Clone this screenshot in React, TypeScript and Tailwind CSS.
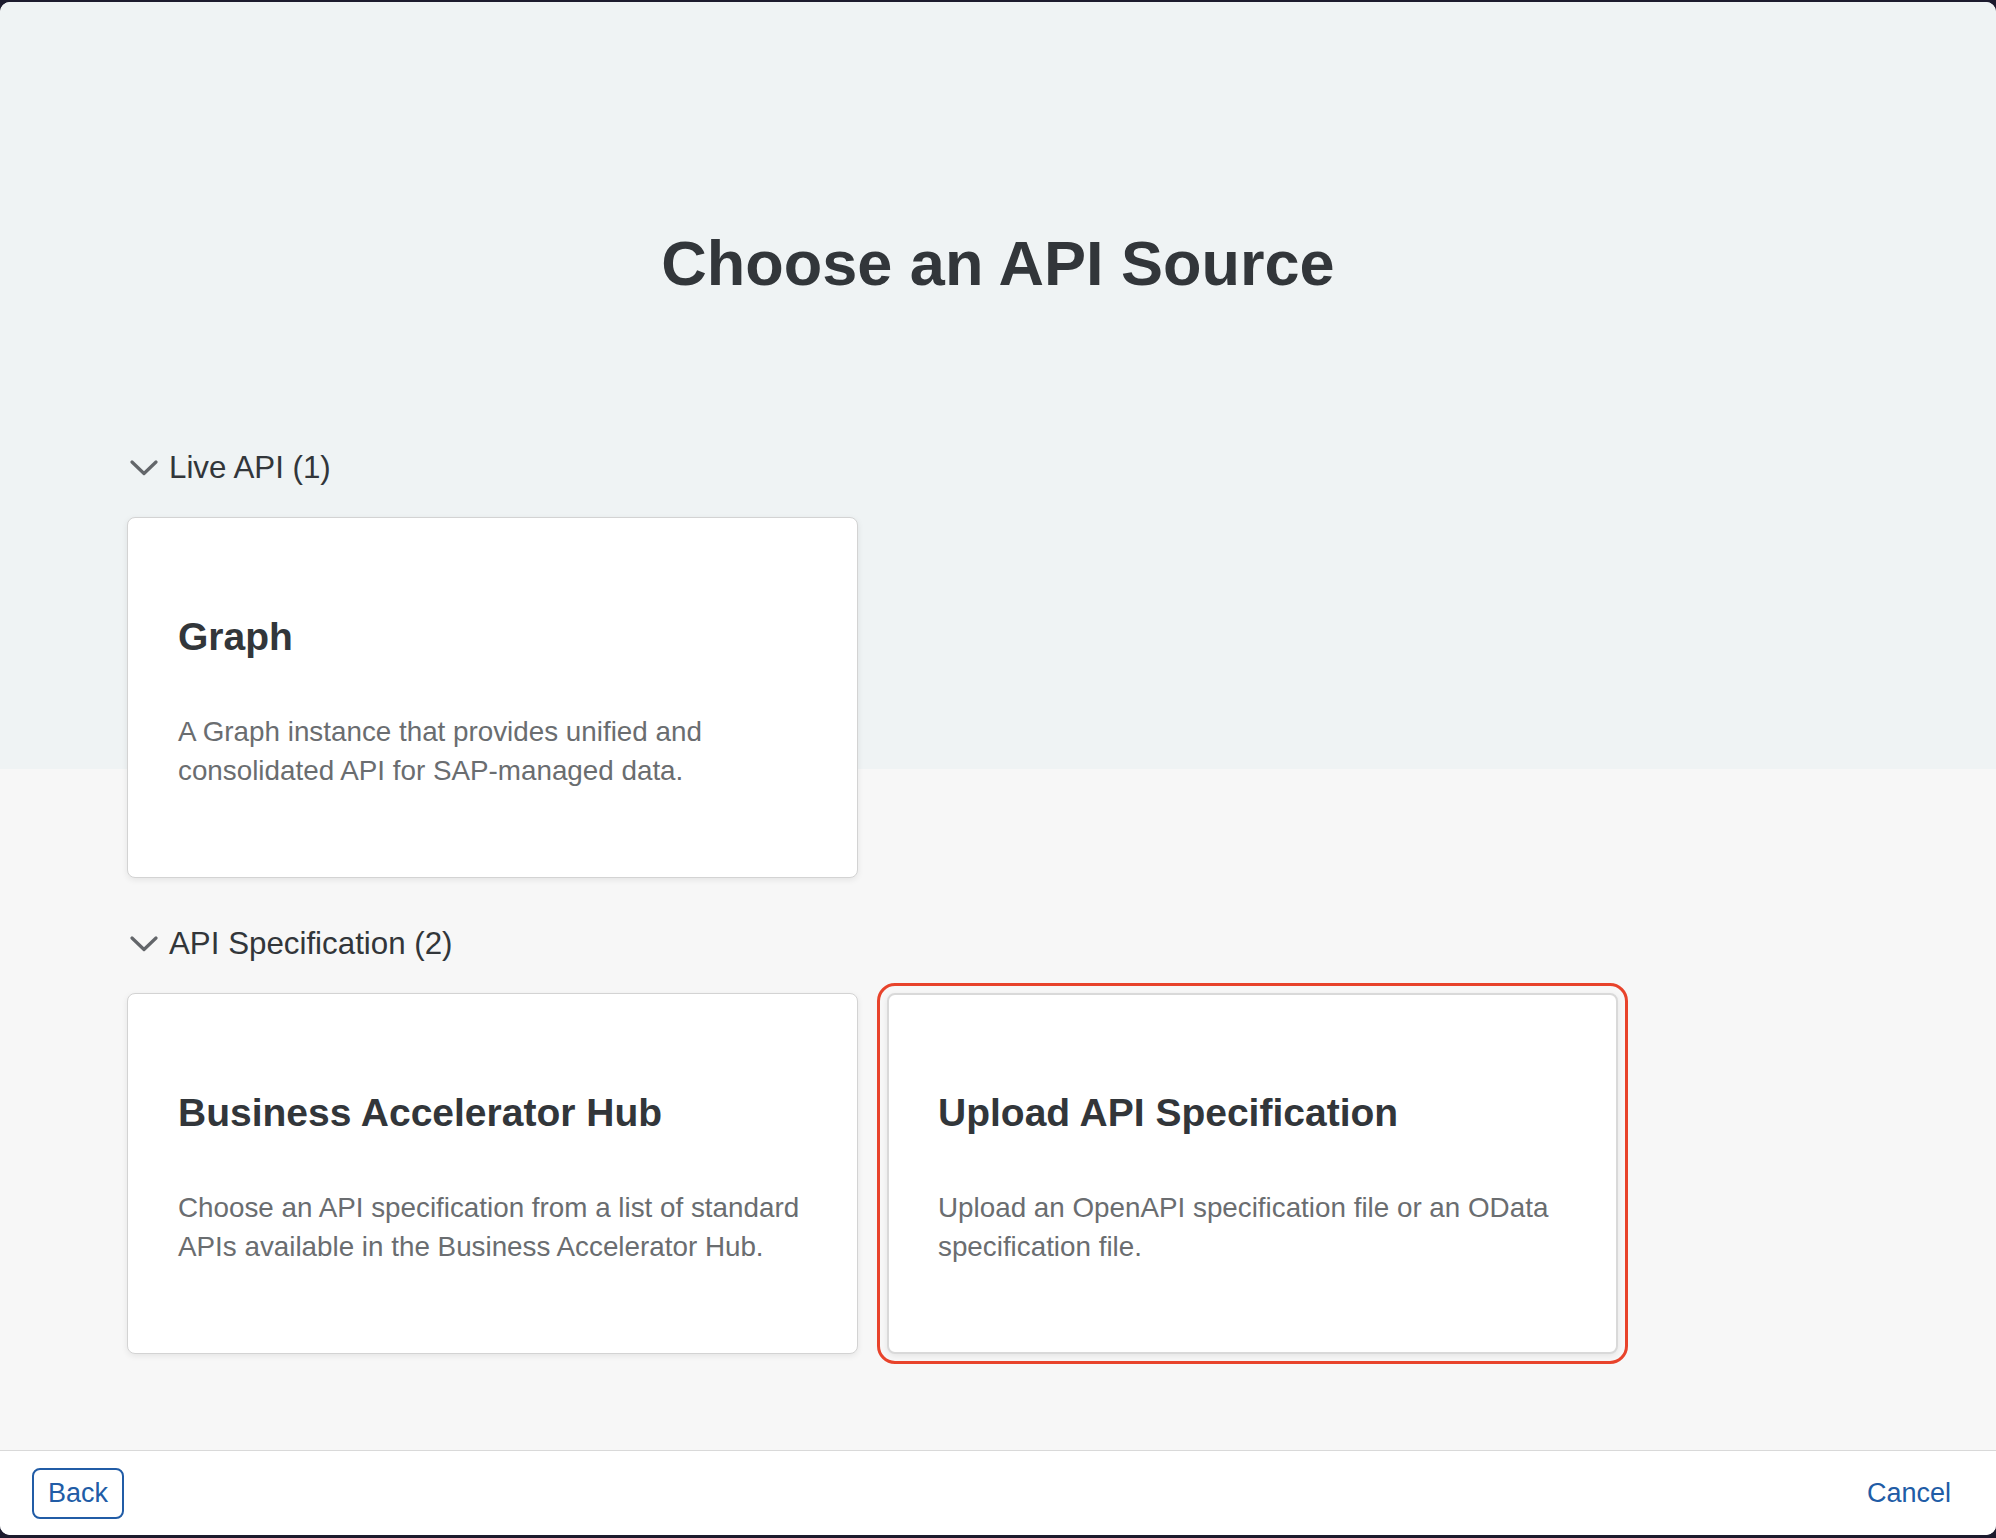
const Chevron = () => (
  <svg width="28" height="16" viewBox="0 0 28 16" className="shrink-0">
    <polyline points="2,2 14,13.5 26,2" fill="none" stroke="#63666a" strokeWidth="3.2" strokeLinecap="round" strokeLinejoin="round" />
  </svg>
)

const SectionHeader = ({ label }: { label: string }) => (
  <div className="flex items-center gap-[11px] pl-[3px] text-[31.3px] leading-[40px] text-[#32363a]">
    <Chevron />
    <span>{label}</span>
  </div>
)

const SourceCard = ({ title, text, selected }: { title: string; text: string; selected?: boolean }) => (
  <div
    className={
      selected
        ? "h-[361px] w-[731px] rounded-[8px] border-2 border-[#d9d9d9] bg-white px-[49px] pt-[95px] shadow-[0_2px_6px_rgba(0,0,0,0.08)] outline-[3.5px] outline-offset-[7px] outline-[#e8432b] outline-solid"
        : "h-[361px] w-[731px] rounded-[8px] border border-[#d3d3d3] bg-white px-[50px] pt-[96px] shadow-[0_2px_6px_rgba(0,0,0,0.08)]"
    }
  >
    <h2 className="text-[39px] font-bold leading-[46px] text-[#32363a]">{title}</h2>
    <p className="mt-[52px] text-[27.8px] leading-[39px] text-[#6a6d70]">{text}</p>
  </div>
)

export default function App() {
  return (
    <div className="h-[1538px] w-[1996px] bg-[#1c1b2e] pt-[2px] pb-[3px]" style={{ fontFamily: '"Liberation Sans", Arial, sans-serif' }}>
      <div className="flex h-full flex-col overflow-hidden rounded-[10px] bg-white">
        <main className="flex-1 bg-[linear-gradient(to_bottom,#eff3f4_767px,#f7f7f7_767px)] pt-[224px]">
          <h1 className="text-center text-[63px] font-bold leading-[74px] text-[#32363a]">Choose an API Source</h1>

          <div className="px-[127px] pt-[148px]">
            <SectionHeader label="Live API (1)" />
            <div className="mt-[29px] flex gap-[29px]">
              <SourceCard title="Graph" text="A Graph instance that provides unified and consolidated API for SAP-managed data." />
            </div>

            <div className="mt-[46px]">
              <SectionHeader label="API Specification (2)" />
            </div>
            <div className="mt-[29px] flex gap-[29px]">
              <SourceCard
                title="Business Accelerator Hub"
                text="Choose an API specification from a list of standard APIs available in the Business Accelerator Hub."
              />
              <SourceCard
                title="Upload API Specification"
                text="Upload an OpenAPI specification file or an OData specification file."
                selected
              />
            </div>
          </div>
        </main>

        <footer className="flex h-[85px] items-center justify-between border-t border-[#d9d9d9] bg-white px-[32px]">
          <button className="h-[51px] rounded-[8px] border-2 border-[#215ca6] px-[14px] text-[27px] text-[#215ca6]">Back</button>
          <button className="h-[51px] px-[13px] text-[27px] text-[#215ca6]">Cancel</button>
        </footer>
      </div>
    </div>
  )
}
